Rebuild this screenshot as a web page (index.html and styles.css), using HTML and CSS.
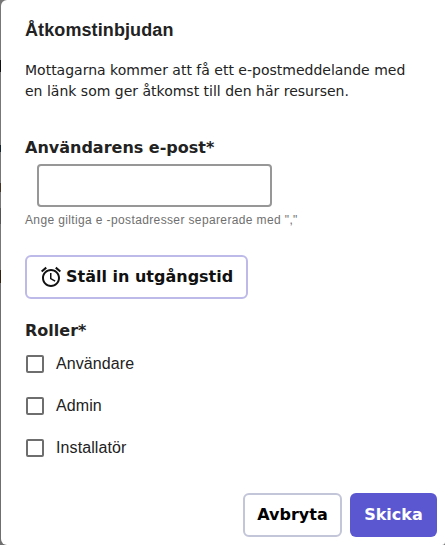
FILE: index.html
```html
<!DOCTYPE html>
<html lang="sv">
<head>
<meta charset="utf-8">
<title>Åtkomstinbjudan</title>
<link rel="stylesheet" href="styles.css">
</head>
<body>
<div class="dialog">
  <h2 class="title">Åtkomstinbjudan</h2>
  <p class="intro">Mottagarna kommer att få ett e-postmeddelande med en länk som ger åtkomst till den här resursen.</p>
  <div class="field-label">Användarens e-post*</div>
  <input class="email" type="text">
  <div class="hint">Ange giltiga e -postadresser separerade med ","</div>
  <button class="expiry" type="button">
    <svg class="alarm" viewBox="0 0 24 24" width="24" height="24" aria-hidden="true"><path fill="currentColor" d="M22 5.72l-4.6-3.86-1.29 1.53 4.6 3.86L22 5.72zM7.88 3.39L6.6 1.86 2 5.71l1.29 1.53 4.59-3.85zM12.5 8H11v6l4.75 2.85.75-1.23-4-2.37V8zM12 4c-4.97 0-9 4.03-9 9s4.03 9 9 9 9-4.03 9-9-4.03-9-9-9zm0 16c-3.87 0-7-3.13-7-7s3.13-7 7-7 7 3.13 7 7-3.13 7-7 7z"/></svg>
    <span>Ställ in utgångstid</span>
  </button>
  <div class="roles-label">Roller*</div>
  <ul class="roles">
    <li class="role"><span class="box"></span><span>Användare</span></li>
    <li class="role"><span class="box"></span><span>Admin</span></li>
    <li class="role"><span class="box"></span><span>Installatör</span></li>
  </ul>
  <div class="actions">
    <button class="btn cancel" type="button">Avbryta</button>
    <button class="btn send" type="button">Skicka</button>
  </div>
</div>
</body>
</html>
```
FILE: styles.css
```css
* { box-sizing: border-box; }
html, body { margin: 0; height: 100%; background: #fff; }
body {
  width: 445px;
  height: 545px;
  overflow: hidden;
  background: linear-gradient(to bottom,
    #777 0 60px, #111 60px 72px, #777 72px 145px, #123 145px 152px,
    #777 152px 183px, #432 183px 192px, #777 192px 208px, #555 208px 224px,
    #777 224px 270px, #321 270px 283px, #6f6f6f 283px);
}
.dialog {
  margin-left: 1px;
  width: 444px;
  height: 545px;
  background: #fff;
  border-radius: 6px 0 3px 6px;
  padding: 19px 8px 0 24px;
  color: #222;
  display: flex;
  flex-direction: column;
  align-items: flex-start;
}
.title {
  margin: 0;
  font: 700 18px/22px "Liberation Sans", sans-serif;
  letter-spacing: 0.1px;
}
.intro {
  margin: 19px 0 0;
  width: 400px;
  font: 14px/21px "DejaVu Sans", sans-serif;
}
.field-label {
  margin-top: 36px;
  font: 700 16px/20px "DejaVu Sans", sans-serif;
}
.email {
  display: block;
  margin: 6px 0 0 12px;
  width: 235px;
  height: 43px;
  border: 2px solid #979797;
  border-radius: 4px;
  background: #fff;
}
.hint {
  margin-top: 5px;
  font: 12px/16px "Liberation Sans", sans-serif;
  letter-spacing: 0.37px;
  color: #6f6f6f;
}
.expiry {
  margin-top: 27px;
  width: 223px;
  height: 44px;
  padding: 0 0 0 12px;
  display: flex;
  align-items: center;
  gap: 3px;
  background: #fff;
  border: 2px solid #bdb9e8;
  border-radius: 6px;
  color: #111;
  font: 700 16px/20px "DejaVu Sans", sans-serif;
}
.alarm { flex: none; }
.roles-label {
  margin-top: 22px;
  font: 700 16px/20px "DejaVu Sans", sans-serif;
}
.roles {
  list-style: none;
  margin: 9px 0 0;
  padding: 0;
  display: flex;
  flex-direction: column;
  gap: 14px;
}
.role {
  display: flex;
  align-items: center;
  gap: 12px;
  height: 28px;
  padding-left: 1px;
  font: 16px/20px "Liberation Sans", sans-serif;
  letter-spacing: 0.1px;
}
.box {
  width: 18px;
  height: 18px;
  border: 2px solid #6e6e6e;
  border-radius: 2px;
  background: #fff;
}
.actions {
  margin-top: auto;
  margin-bottom: 8px;
  align-self: flex-end;
  display: flex;
  gap: 8px;
}
.btn {
  height: 44px;
  border-radius: 6px;
  font: 700 16px/20px "DejaVu Sans", sans-serif;
  padding: 0;
}
.cancel {
  width: 99px;
  background: #fff;
  border: 2px solid #c3c5d8;
  color: #000;
}
.send {
  width: 87px;
  background: #5b57d1;
  border: none;
  color: #fff;
}
```
